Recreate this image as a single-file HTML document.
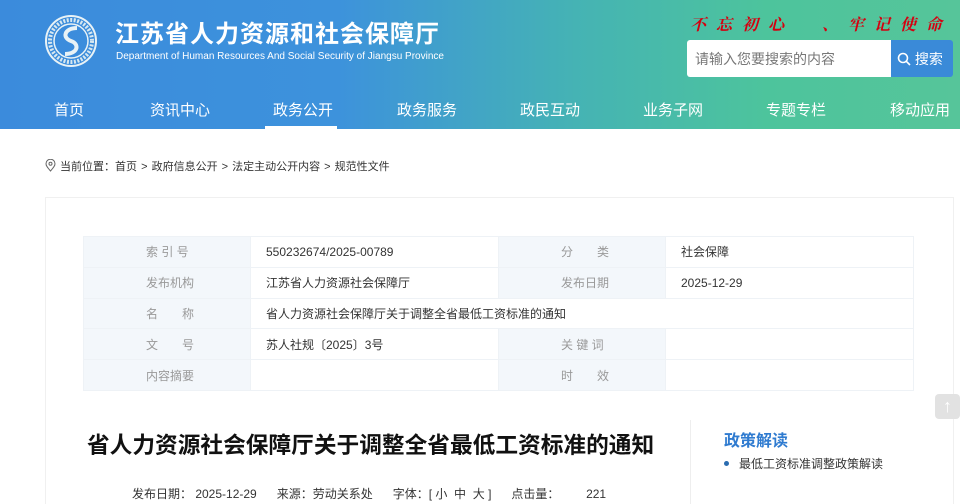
<!DOCTYPE html>
<html><head><meta charset="utf-8"><style>
*{margin:0;padding:0;box-sizing:border-box}
html,body{width:960px;height:504px;overflow:hidden}
body{background:#fff;font-family:"Liberation Sans","Noto Sans CJK SC",sans-serif;position:relative}
.hd{position:absolute;left:0;top:0;width:960px;height:129px;background:linear-gradient(90deg,#3b8bdc 0%,#3d92dc 35%,#45b3b4 60%,#4dc49c 80%,#56c59a 100%)}
.abs{position:absolute}
.nav a{position:absolute;top:99px;color:#fff;font-size:15px;white-space:nowrap}
table{position:absolute;left:83px;top:236px;width:831px;border-collapse:collapse;font-size:12px}
td{height:30.8px;border:1px solid #eef2f6;color:#333;padding-left:15px}
td.l{background:#f3f7fb;color:#999;width:167px;padding-left:62px}
</style></head><body>
<div class="hd"></div>
<svg class="abs" style="left:44px;top:14px" width="54" height="54" viewBox="0 0 54 54"><circle cx="27" cy="27" r="25" fill="none" stroke="#e8f2f6" stroke-width="2"/><circle cx="27" cy="27" r="21" fill="none" stroke="#d8e8f0" stroke-width="4" stroke-dasharray="2 1.5"/><circle cx="27" cy="27" r="17" fill="none" stroke="#e8f2f6" stroke-width="1.5"/><path d="M33 14 C20 14 18 24 27 27 C36 30 34 40 21 40" fill="none" stroke="#e8f2f6" stroke-width="4"/></svg>
<div class="abs" style="left:115px;top:14px;color:#fff;font-size:24px;font-weight:bold;letter-spacing:1px">江苏省人力资源和社会保障厅</div>
<div class="abs" style="left:116px;top:51px;color:#fff;font-size:10px;white-space:nowrap">Department of Human Resources And Social Security of Jiangsu Province</div>
<div class="abs" style="left:690px;top:12px;color:#d40010;font-size:16px;font-weight:bold;font-style:italic;font-family:'Noto Serif CJK SC',serif;letter-spacing:10px;white-space:nowrap">不忘初心 &nbsp;、牢记使命</div>
<div class="abs" style="left:687px;top:40px;width:204px;height:37px;background:#fff;border-radius:3px 0 0 3px;color:#777;font-size:14px;padding:9px 0 0 8px">请输入您要搜索的内容</div>
<div class="abs" style="left:891px;top:40px;width:62px;height:37px;background:#3a8ad8;border-radius:0 3px 3px 0;color:#fff;font-size:14px;padding:9px 0 0 6px"><svg width="14" height="14" viewBox="0 0 14 14" style="vertical-align:-2px"><circle cx="6" cy="6" r="4.5" fill="none" stroke="#fff" stroke-width="1.6"/><path d="M9.3 9.3L13 13" stroke="#fff" stroke-width="1.6"/></svg> 搜索</div>
<div class="nav"><a style="left:54px">首页</a><a style="left:150px">资讯中心</a><a style="left:273px">政务公开</a><a style="left:397px">政务服务</a><a style="left:520px">政民互动</a><a style="left:643px">业务子网</a><a style="left:766px">专题专栏</a><a style="left:890px">移动应用</a></div>
<div class="abs" style="left:265px;top:126px;width:72px;height:3px;background:#fff"></div>
<div class="abs" style="left:45px;top:158px;font-size:11px;color:#333;white-space:nowrap;word-spacing:1px"><svg width="11" height="13" viewBox="0 0 11 13" style="vertical-align:-2px"><path d="M5.5 12C2 8 1 6.5 1 4.7A4.5 4.5 0 0 1 10 4.7C10 6.5 9 8 5.5 12Z" fill="none" stroke="#666"/><circle cx="5.5" cy="4.8" r="1.5" fill="none" stroke="#666"/></svg> 当前位置：首页 &gt; 政府信息公开 &gt; 法定主动公开内容 &gt; 规范性文件</div>
<div class="abs" style="left:45px;top:197px;width:909px;height:307px;border:1px solid #f0f0f0;border-bottom:none"></div>
<table>
<tr><td class="l">索 引 号</td><td style="width:248px">550232674/2025-00789</td><td class="l">分　　类</td><td>社会保障</td></tr>
<tr><td class="l">发布机构</td><td>江苏省人力资源社会保障厅</td><td class="l">发布日期</td><td>2025-12-29</td></tr>
<tr><td class="l">名　　称</td><td colspan="3">省人力资源社会保障厅关于调整全省最低工资标准的通知</td></tr>
<tr><td class="l">文　　号</td><td>苏人社规〔2025〕3号</td><td class="l">关 键 词</td><td></td></tr>
<tr><td class="l">内容摘要</td><td></td><td class="l">时　　效</td><td></td></tr>
</table>
<div class="abs" style="left:87px;top:427px;font-size:22.7px;font-weight:bold;color:#111;white-space:nowrap">省人力资源社会保障厅关于调整全省最低工资标准的通知</div>
<div class="abs" style="left:690px;top:420px;width:1px;height:84px;background:#eee"></div>
<div class="abs" style="left:724px;top:427px;font-size:16px;font-weight:bold;color:#2f7bd0">政策解读</div>
<div class="abs" style="left:724px;top:455px;font-size:12px;color:#333;white-space:nowrap"><span style="display:inline-block;width:5px;height:5px;border-radius:50%;background:#2a6cb0;vertical-align:2px;margin-right:10px"></span>最低工资标准调整政策解读</div>
<div class="abs" style="left:132px;top:486px;font-size:12px;line-height:16px;color:#333;white-space:pre">发布日期： 2025-12-29      来源：劳动关系处      字体：[ 小  中  大 ]      点击量：        221</div>
<div class="abs" style="left:935px;top:394px;width:25px;height:25px;background:#e2e2e2;border-radius:4px;color:#fff;font-size:18px;font-weight:bold;text-align:center;line-height:25px">↑</div>
</body></html>
